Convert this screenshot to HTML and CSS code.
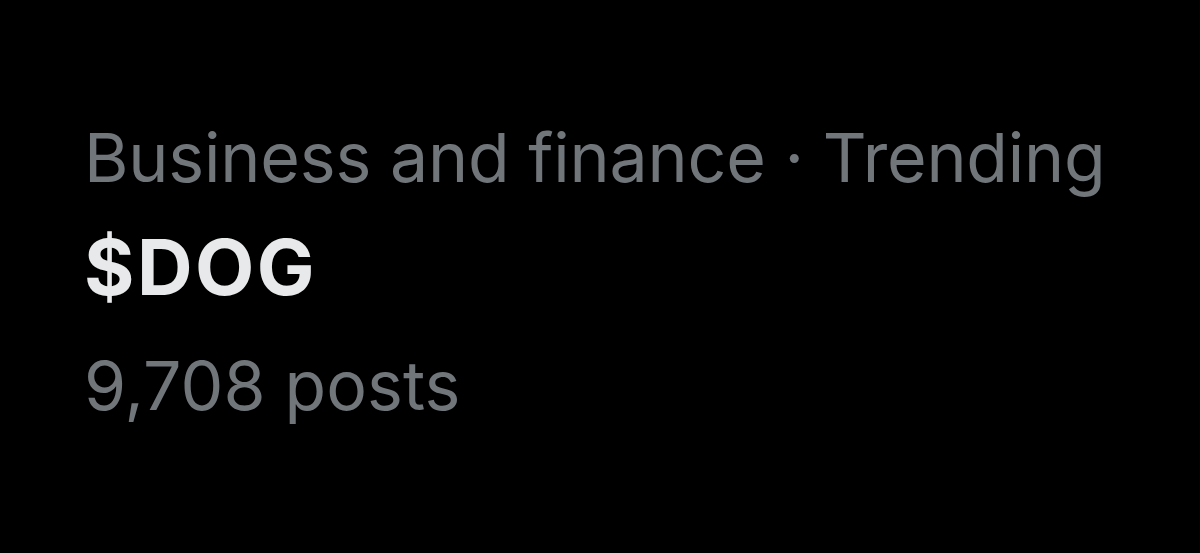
FILE: index.html
```html
<!DOCTYPE html>
<html>
<head>
<meta charset="utf-8">
<link rel="stylesheet" href="styles.css">
</head>
<body>
<div class="trend">
  <div class="meta">Business and finance · Trending</div>
  <div class="title">$DOG</div>
  <div class="count">9,708 posts</div>
</div>
</body>
</html>
```
FILE: styles.css
```css
html, body {
  margin: 0;
  padding: 0;
  background: #000;
  height: 100%;
}
body {
  font-family: Inter, "Noto Sans", sans-serif;
}
.trend {
  display: flex;
  flex-direction: column;
  padding: 102px 0 0 84px;
}
.meta, .title, .count {
  font-size: 68px;
  line-height: 110px;
  white-space: nowrap;
}
.meta {
  color: #71767b;
  letter-spacing: -0.2px;
}
.title {
  color: #e7e9ea;
  font-weight: 700;
  font-size: 77px;
  letter-spacing: 2.5px;
}
.count {
  color: #71767b;
  margin-top: 8px;
}
```
